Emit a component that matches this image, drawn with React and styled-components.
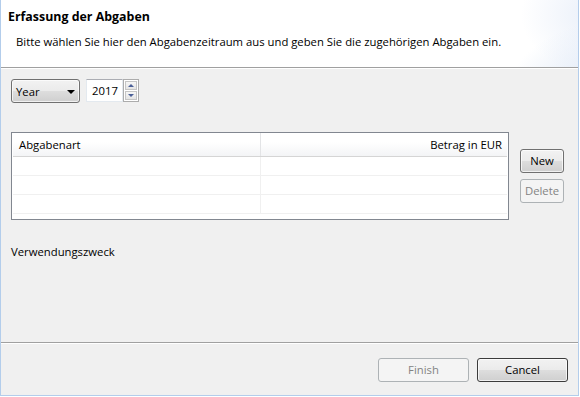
import React from "react";
import styled, { createGlobalStyle, css } from "styled-components";

const Global = createGlobalStyle`
  html, body { margin: 0; padding: 0; background: #ffffff; }
  body { font-family: "Open Sans", "Noto Sans", sans-serif; font-size: 11.3px; color: #000; }
  * { box-sizing: border-box; }
`;

const Frame = styled.div`
  width: 579px;
  height: 396px;
  display: flex;
  flex-direction: column;
  background: #f0f0f0;
  border: 1px solid #b3cdeb;
  border-top: none;
`;

const Header = styled.div`
  height: 68px;
  flex: none;
  background:
    radial-gradient(ellipse 110px 80px at 615px 100px, rgba(212, 224, 243, 0.95) 0%, rgba(225, 234, 247, 0.6) 60%, rgba(255,255,255,0) 100%),
    radial-gradient(ellipse 80px 60px at 600px 15px, rgba(222, 231, 246, 0.7) 0%, rgba(255,255,255,0) 100%),
    #ffffff;
  border-bottom: 1px solid #a0a0a0;
  box-shadow: 0 1px 0 #ffffff;
  padding: 8px 0 0 7px;
`;

const Title = styled.div`
  font-weight: 700;
  font-size: 12.4px;
  line-height: 17px;
`;

const Description = styled.div`
  margin: 9px 0 0 8px;
  line-height: 16px;
`;

const Body = styled.div`
  flex: 1;
  padding: 11px 10px 0 10px;
  display: flex;
  flex-direction: column;
`;

const PeriodRow = styled.div`
  display: flex;
  align-items: flex-start;
  gap: 6px;
`;

const buttonFace = css`
  border: 1px solid #707070;
  border-radius: 3px;
  background: linear-gradient(#f2f2f2 0%, #ebebeb 48%, #dddddd 52%, #cfcfcf 100%);
  box-shadow: inset 0 0 0 1px rgba(255, 255, 255, 0.7);
`;

const Combo = styled.div`
  ${buttonFace}
  width: 69px;
  height: 24px;
  display: flex;
  align-items: center;
  justify-content: space-between;
  padding: 0 4px 0 4px;
`;

const ComboArrow = styled.span`
  width: 0;
  height: 0;
  border-left: 4px solid transparent;
  border-right: 4px solid transparent;
  border-top: 4px solid #000;
  margin-top: 1px;
`;

const Spinner = styled.div`
  display: flex;
  height: 23px;
`;

const SpinnerInput = styled.div`
  width: 37px;
  height: 23px;
  background: #fff;
  border: 1px solid #e3e9ef;
  border-top-color: #abadb3;
  padding: 3px 0 0 5px;
  line-height: 16px;
`;

const SpinnerButtons = styled.div`
  display: flex;
  flex-direction: column;
  border: 1px solid #acacac;
  width: 16px;
  height: 23px;
  background: #fff;
  padding: 1px;
  gap: 1px;
`;

const SpinnerButton = styled.div`
  flex: 1;
  display: flex;
  align-items: center;
  justify-content: center;
  border: 1px solid #c5c5c5;
  background: linear-gradient(#f6f6f6, #e4e4e4);
`;

const SpinArrow = styled.span`
  width: 0;
  height: 0;
  border-left: 3px solid transparent;
  border-right: 3px solid transparent;
  ${(p) => (p.$up ? "border-bottom: 3px solid #4a5f97;" : "border-top: 3px solid #4a5f97;")}
`;

const TableArea = styled.div`
  display: flex;
  margin-top: 29px;
  gap: 11px;
`;

const Table = styled.div`
  width: 498px;
  height: 88px;
  border: 1px solid #828790;
  background: #fff;
  padding: 0 1px 0 1px;
`;

const HeaderRow = styled.div`
  display: grid;
  grid-template-columns: 248px 247px;
  height: 24px;
  background: linear-gradient(#ffffff 0%, #ffffff 40%, #f3f4f6 100%);
  border-bottom: 1px solid #d5d5d5;
`;

const HeaderCell = styled.div`
  padding: 0 6px 0 6px;
  display: flex;
  align-items: center;
  justify-content: ${(p) => (p.$right ? "flex-end" : "flex-start")};
  border-right: ${(p) => (p.$right ? "none" : "1px solid #e3e4e6")};
`;

const Row = styled.div`
  display: grid;
  grid-template-columns: 248px 247px;
  height: 19px;
  border-bottom: 1px solid #f0f0f0;
`;

const Cell = styled.div`
  border-right: ${(p) => (p.$last ? "none" : "1px solid #f0f0f0")};
`;

const SideButtons = styled.div`
  display: flex;
  flex-direction: column;
  gap: 6px;
  padding-top: 17px;
`;

const Button = styled.div`
  ${buttonFace}
  width: ${(p) => p.$w}px;
  height: 24px;
  display: flex;
  align-items: center;
  justify-content: center;
  line-height: 16px;
  ${(p) =>
    p.$default &&
    css`
      border-color: #3c3c3c;
    `}
  ${(p) =>
    p.$disabled &&
    css`
      border-color: #adb2b5;
      background: #f4f4f4;
      box-shadow: none;
      color: #838383;
    `}
`;

const Label = styled.div`
  margin-top: 24px;
  line-height: 16px;
`;

const Footer = styled.div`
  flex: none;
  height: 53px;
  border-top: 1px solid #a0a0a0;
  box-shadow: inset 0 1px 0 #ffffff;
  display: flex;
  justify-content: flex-end;
  align-items: flex-start;
  gap: 8px;
  padding: 15px 10px 0 0;
`;

export default function App() {
  return (
    <>
      <Global />
      <Frame>
        <Header>
          <Title>Erfassung der Abgaben</Title>
          <Description>
            Bitte wählen Sie hier den Abgabenzeitraum aus und geben Sie die zugehörigen Abgaben ein.
          </Description>
        </Header>
        <Body>
          <PeriodRow>
            <Combo>
              <span>Year</span>
              <ComboArrow />
            </Combo>
            <Spinner>
              <SpinnerInput>2017</SpinnerInput>
              <SpinnerButtons>
                <SpinnerButton>
                  <SpinArrow $up />
                </SpinnerButton>
                <SpinnerButton>
                  <SpinArrow />
                </SpinnerButton>
              </SpinnerButtons>
            </Spinner>
          </PeriodRow>
          <TableArea>
            <Table>
              <HeaderRow>
                <HeaderCell>Abgabenart</HeaderCell>
                <HeaderCell $right>Betrag in EUR</HeaderCell>
              </HeaderRow>
              {[0, 1, 2].map((i) => (
                <Row key={i}>
                  <Cell />
                  <Cell $last />
                </Row>
              ))}
            </Table>
            <SideButtons>
              <Button $w={44}>New</Button>
              <Button $w={44} $disabled>
                Delete
              </Button>
            </SideButtons>
          </TableArea>
          <Label>Verwendungszweck</Label>
        </Body>
        <Footer>
          <Button $w={91} $disabled>
            Finish
          </Button>
          <Button $w={91} $default>
            Cancel
          </Button>
        </Footer>
      </Frame>
    </>
  );
}
